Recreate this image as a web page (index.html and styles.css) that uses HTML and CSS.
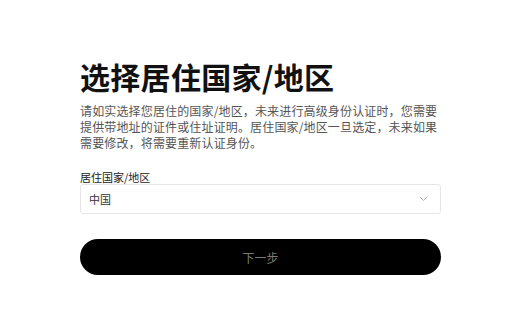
FILE: index.html
```html
<!DOCTYPE html>
<html lang="zh-CN">
<head>
<meta charset="utf-8">
<title>选择居住国家/地区</title>
<link rel="stylesheet" href="styles.css">
</head>
<body>
<main class="page">
  <h1 class="title">选择居住国家/地区</h1>
  <p class="desc">请如实选择您居住的国家/地区，未来进行高级身份认证时，您需要提供带地址的证件或住址证明。居住国家/地区一旦选定，未来如果需要修改，将需要重新认证身份。</p>
  <label class="label">居住国家/地区</label>
  <div class="select">
    <span class="select-value">中国</span>
    <svg class="chevron" width="9" height="6" viewBox="0 0 9 6"><path d="M1 1 L4.5 4.5 L8 1" fill="none" stroke="#b5b5b5" stroke-width="1"/></svg>
  </div>
  <button class="next">下一步</button>
</main>
</body>
</html>
```
FILE: styles.css
```css
html, body {
  margin: 0;
  padding: 0;
  background: #fff;
}
body {
  font-family: "Noto Sans CJK SC", "Noto Sans", "Liberation Sans", sans-serif;
  color: #111;
}
.page {
  width: 361px;
  padding: 58px 0 0 80px;
  display: flex;
  flex-direction: column;
}
.title {
  margin: 0;
  font-size: 30px;
  line-height: 36px;
  font-weight: 700;
  color: #111;
  letter-spacing: 0.3px;
}
.desc {
  margin: 9px 0 0 0;
  font-size: 12px;
  line-height: 16px;
  color: #555;
  letter-spacing: 0.15px;
}
.label {
  margin-top: 20px;
  font-size: 11px;
  line-height: 13px;
  color: #222;
}
.select {
  margin-top: 0;
  height: 30px;
  box-sizing: border-box;
  border: 1px solid #e6e6e6;
  border-radius: 3px;
  display: flex;
  align-items: center;
  justify-content: space-between;
  padding: 0 12px 0 8px;
}
.select-value {
  font-size: 11px;
  color: #333;
}
.chevron {
  display: block;
}
.next {
  margin-top: 25px;
  height: 36px;
  border: none;
  border-radius: 18px;
  background: #000;
  color: #7a7a7a;
  font-family: inherit;
  font-size: 12px;
  padding: 0;
}
```
